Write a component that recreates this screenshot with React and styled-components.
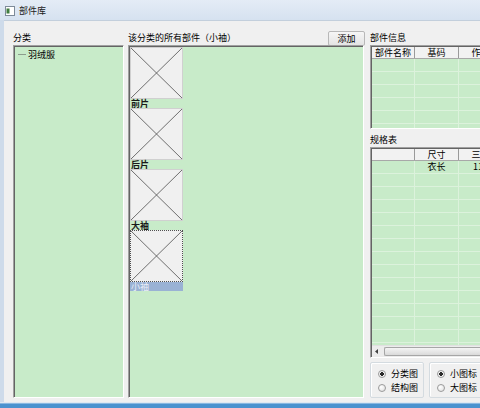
import styled, { createGlobalStyle } from "styled-components";

const GlobalStyle = createGlobalStyle`
  html, body {
    margin: 0;
    padding: 0;
    background: #ffffff;
  }
  body {
    font-family: "Noto Sans CJK SC", "Liberation Sans", sans-serif;
    font-size: 9px;
    color: #000;
  }
`;

const GREEN = "#c8ebc9";
const GRID = "#dcf2dc";

const parts = [
  { name: "前片" },
  { name: "后片" },
  { name: "大袖" },
  { name: "小袖", selected: true },
];

const infoCols = ["部件名称", "基码", "作用"];
const specCols = ["", "尺寸", "三号"];
const specRows = [["", "衣长", "110"]];

const App = () => {
  return (
    <>
      <GlobalStyle />
      <Window>
        <TitleBar>
          <TitleIcon>
            <svg width="10" height="10" viewBox="0 0 10 10">
              <rect x="0.5" y="0.5" width="9" height="9" fill="#fff" stroke="#7d8a99" />
              <rect x="1.5" y="2.5" width="3" height="5" fill="#3f7d3f" />
            </svg>
          </TitleIcon>
          <TitleText>部件库</TitleText>
        </TitleBar>

        <Client>
          <Column $width={111}>
            <HeaderRow>分类</HeaderRow>
            <Sunken>
              <Tree>
                <TreeItem>羽绒服</TreeItem>
              </Tree>
            </Sunken>
          </Column>

          <Column $width={236} $gap={4}>
            <HeaderRow>
              <span>该分类的所有部件（小袖）</span>
              <Button>添加</Button>
            </HeaderRow>
            <Sunken>
              <PartList>
                {parts.map((p) => (
                  <Thumb key={p.name}>
                    <ThumbImage $focused={p.selected}>
                      <svg width="100%" height="100%" viewBox="0 0 52 51" preserveAspectRatio="none">
                        <line x1="0" y1="0" x2="52" y2="51" stroke="#4a4a4a" strokeWidth="0.8" />
                        <line x1="52" y1="0" x2="0" y2="51" stroke="#4a4a4a" strokeWidth="0.8" />
                      </svg>
                    </ThumbImage>
                    <ThumbLabel $selected={p.selected}>{p.name}</ThumbLabel>
                  </Thumb>
                ))}
              </PartList>
            </Sunken>
          </Column>

          <Column $width={160} $gap={6}>
            <HeaderRow>部件信息</HeaderRow>
            <Grid $height={84}>
              <GridHead>
                {infoCols.map((c, i) => (
                  <HeadCell key={i} $w={i === 0 ? 43 : 44}>{c}</HeadCell>
                ))}
              </GridHead>
              <GridBody>
                {Array.from({ length: 6 }).map((_, r) => (
                  <Row key={r}>
                    {infoCols.map((c, i) => (
                      <Cell key={i} $w={i === 0 ? 43 : 44} />
                    ))}
                  </Row>
                ))}
              </GridBody>
            </Grid>

            <HeaderRow $top={4}>规格表</HeaderRow>
            <Grid $grow>
              <GridHead>
                {specCols.map((c, i) => (
                  <HeadCell key={i} $w={i === 0 ? 43 : 44}>{c}</HeadCell>
                ))}
              </GridHead>
              <GridBody>
                {Array.from({ length: 15 }).map((_, r) => (
                  <Row key={r}>
                    {specCols.map((c, i) => (
                      <Cell key={i} $w={i === 0 ? 43 : 44}>
                        {specRows[r] ? specRows[r][i] : ""}
                      </Cell>
                    ))}
                  </Row>
                ))}
              </GridBody>
              <HScroll>
                <ArrowButton>
                  <svg width="4" height="5" viewBox="0 0 4 5">
                    <path d="M3 0 L0 2.5 L3 5 Z" fill="#404040" />
                  </svg>
                </ArrowButton>
                <ScrollThumb />
              </HScroll>
            </Grid>

            <RadioRow>
              <GroupBox $width={54}>
                <Radio $checked>分类图</Radio>
                <Radio>结构图</Radio>
              </GroupBox>
              <GroupBox $width={70}>
                <Radio $checked>小图标</Radio>
                <Radio>大图标</Radio>
              </GroupBox>
            </RadioRow>
          </Column>
        </Client>
        <BottomEdge />
      </Window>
    </>
  );
};

export default App;

const Window = styled.div`
  width: 480px;
  height: 408px;
  overflow: hidden;
  display: flex;
  flex-direction: column;
  background: #cedbea;
`;

const TitleBar = styled.div`
  height: 20px;
  box-sizing: border-box;
  padding: 2px 0 0 5px;
  flex-shrink: 0;
  display: flex;
  align-items: center;
  gap: 4px;
  background: linear-gradient(#e4ecf6, #d6e2f0);
`;

const TitleIcon = styled.div`
  width: 10px;
  height: 10px;
  display: flex;
`;

const TitleText = styled.span`
  font-size: 9px;
  line-height: 10px;
  color: #1a1a1a;
`;

const Client = styled.div`
  flex: 1;
  min-height: 0;
  margin-left: 4px;
  padding: 10px 0 4px 9px;
  display: flex;
  background: #f0f0f0;
  border-top: 1px solid #c3cfdc;
`;

const Column = styled.div`
  width: ${(p) => p.$width}px;
  flex-shrink: 0;
  margin-left: ${(p) => p.$gap || 0}px;
  display: flex;
  flex-direction: column;
`;

const HeaderRow = styled.div`
  height: 14px;
  flex-shrink: 0;
  margin-top: ${(p) => p.$top || 0}px;
  display: flex;
  align-items: center;
  justify-content: space-between;
  font-size: 9px;
  line-height: 14px;
`;

const Button = styled.button`
  height: 15px;
  width: 37px;
  margin-right: -1px;
  padding: 0;
  font-family: inherit;
  font-size: 9px;
  line-height: 13px;
  color: #000;
  background: linear-gradient(#f6f6f6, #e4e4e4);
  border: 1px solid #b8b8b8;
  border-radius: 2px;
`;

const Sunken = styled.div`
  flex: 1;
  min-height: 0;
  background: ${GREEN};
  border: 1px solid;
  border-color: #a0a0a0 #ffffff #ffffff #a0a0a0;
  box-shadow: inset 1px 1px 0 #646464;
  overflow: hidden;
`;

const Tree = styled.div`
  padding: 2px 0 0 4px;
`;

const TreeItem = styled.div`
  display: flex;
  align-items: center;
  height: 12px;
  font-size: 9px;

  &::before {
    content: "";
    width: 8px;
    margin-right: 2px;
    border-top: 1px solid #8c9c8c;
  }
`;

const PartList = styled.div`
  padding: 1px 0 0 1px;
  display: flex;
  flex-direction: column;
`;

const Thumb = styled.div`
  width: 53px;
  display: flex;
  flex-direction: column;
`;

const ThumbImage = styled.div`
  height: 52px;
  box-sizing: border-box;
  background: #f0f0f0;
  border: 1px ${(p) => (p.$focused ? "dotted #505050" : "solid #d0d0d0")};
  display: flex;
`;

const ThumbLabel = styled.div`
  height: 9px;
  font-size: 9px;
  line-height: 9px;
  font-weight: ${(p) => (p.$selected ? 400 : 700)};
  padding-left: 1px;
  background: ${(p) => (p.$selected ? "#9ab2d4" : "transparent")};
  color: ${(p) => (p.$selected ? "#e9eef6" : "#1a1a1a")};
`;

const Grid = styled.div`
  height: ${(p) => (p.$grow ? "auto" : `${p.$height}px`)};
  flex: ${(p) => (p.$grow ? 1 : "none")};
  min-height: 0;
  box-sizing: border-box;
  display: flex;
  flex-direction: column;
  background: ${GREEN};
  border: 1px solid;
  border-color: #a0a0a0 #ffffff #ffffff #a0a0a0;
  box-shadow: inset 1px 1px 0 #646464;
  padding: 1px 0 0 1px;
  overflow: hidden;
`;

const GridHead = styled.div`
  display: flex;
  height: 11px;
  flex-shrink: 0;
  background: #f2f2f2;
  border-bottom: 1px solid #a8a8a8;
`;

const HeadCell = styled.div`
  width: ${(p) => p.$w}px;
  flex-shrink: 0;
  box-sizing: border-box;
  border-right: 1px solid #9a9a9a;
  text-align: center;
  font-size: 9px;
  line-height: 11px;
  white-space: nowrap;
`;

const GridBody = styled.div`
  flex: 1;
  min-height: 0;
  overflow: hidden;
`;

const Row = styled.div`
  display: flex;
  height: 13px;
  box-sizing: border-box;
  border-bottom: 1px solid ${GRID};
`;

const Cell = styled.div`
  width: ${(p) => p.$w}px;
  flex-shrink: 0;
  box-sizing: border-box;
  border-right: 1px solid ${GRID};
  text-align: center;
  font-size: 9px;
  line-height: 12px;
  white-space: nowrap;
`;

const HScroll = styled.div`
  height: 11px;
  flex-shrink: 0;
  display: flex;
  align-items: stretch;
  background: #ececec;
  border-top: 1px solid #e0e0e0;
`;

const ArrowButton = styled.div`
  width: 10px;
  display: flex;
  align-items: center;
  justify-content: center;
`;

const ScrollThumb = styled.div`
  flex: 1;
  margin: 1px 0 1px 2px;
  background: linear-gradient(#f4f4f4, #dadada);
  border: 1px solid #a6a6a6;
  border-right: none;
  border-radius: 2px 0 0 2px;
`;

const RadioRow = styled.div`
  height: 36px;
  flex-shrink: 0;
  margin-top: 4px;
  display: flex;
  gap: 5px;
`;

const GroupBox = styled.div`
  width: ${(p) => p.$width}px;
  box-sizing: border-box;
  padding: 4px 0 0 7px;
  border: 1px solid #d4dbe0;
  border-radius: 2px;
  box-shadow: inset 1px 1px 0 #fff;
  display: flex;
  flex-direction: column;
  gap: 1px;
`;

const Radio = styled.div`
  height: 13px;
  display: flex;
  align-items: center;
  font-size: 9px;

  &::before {
    content: "";
    width: 6px;
    height: 6px;
    margin-right: 5px;
    border-radius: 50%;
    border: 1px solid #9a9a9a;
    background: ${(p) =>
      p.$checked
        ? "radial-gradient(circle, #2a2a2a 0 1.6px, #f4f4f4 2px)"
        : "radial-gradient(circle at 35% 35%, #ffffff, #dcdcdc)"};
  }
`;

const BottomEdge = styled.div`
  height: 6px;
  flex-shrink: 0;
  background: linear-gradient(#dfe8f2 0 1px, #8ab8e0 1px 2px, #4b92cf 2px);
`;
